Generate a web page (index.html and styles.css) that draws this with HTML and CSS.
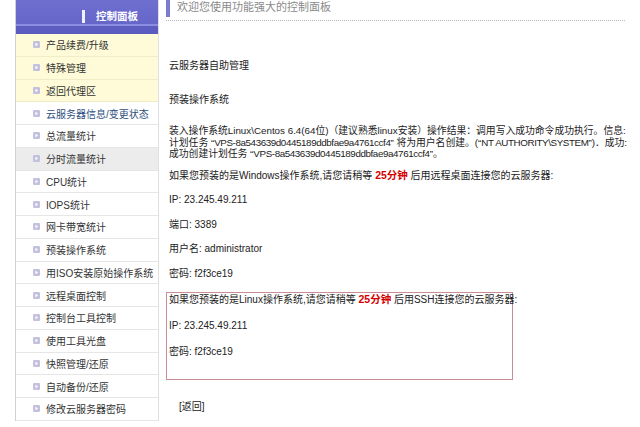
FILE: index.html
```html
<!DOCTYPE html>
<html lang="zh-CN">
<head>
<meta charset="utf-8">
<title>控制面板</title>
<link rel="stylesheet" href="styles.css">
</head>
<body>
<div class="page">
  <aside class="sidebar">
    <div class="side-head">
      <span class="head-bar"></span>
      <span class="head-title">控制面板</span>
    </div>
    <ul class="menu">
      <li class="item yellow"><svg class="bul" viewBox="0 0 7 7"><rect width="7" height="7" rx="1.2" fill="#c3c1dd"/><path d="M2.5 1.8 L5 3.5 L2.5 5.2Z" fill="#fff"/></svg>产品续费/升级</li>
      <li class="item yellow"><svg class="bul" viewBox="0 0 7 7"><rect width="7" height="7" rx="1.2" fill="#c3c1dd"/><path d="M2.5 1.8 L5 3.5 L2.5 5.2Z" fill="#fff"/></svg>特殊管理</li>
      <li class="item yellow"><svg class="bul" viewBox="0 0 7 7"><rect width="7" height="7" rx="1.2" fill="#c3c1dd"/><path d="M2.5 1.8 L5 3.5 L2.5 5.2Z" fill="#fff"/></svg>返回代理区</li>
      <li class="item active"><svg class="bul" viewBox="0 0 7 7"><rect width="7" height="7" rx="1.2" fill="#c3c1dd"/><path d="M2.5 1.8 L5 3.5 L2.5 5.2Z" fill="#fff"/></svg>云服务器信息/变更状态</li>
      <li class="item"><svg class="bul" viewBox="0 0 7 7"><rect width="7" height="7" rx="1.2" fill="#c3c1dd"/><path d="M2.5 1.8 L5 3.5 L2.5 5.2Z" fill="#fff"/></svg>总流量统计</li>
      <li class="item hover"><svg class="bul" viewBox="0 0 7 7"><rect width="7" height="7" rx="1.2" fill="#c3c1dd"/><path d="M2.5 1.8 L5 3.5 L2.5 5.2Z" fill="#fff"/></svg>分时流量统计</li>
      <li class="item"><svg class="bul" viewBox="0 0 7 7"><rect width="7" height="7" rx="1.2" fill="#c3c1dd"/><path d="M2.5 1.8 L5 3.5 L2.5 5.2Z" fill="#fff"/></svg>CPU统计</li>
      <li class="item"><svg class="bul" viewBox="0 0 7 7"><rect width="7" height="7" rx="1.2" fill="#c3c1dd"/><path d="M2.5 1.8 L5 3.5 L2.5 5.2Z" fill="#fff"/></svg>IOPS统计</li>
      <li class="item"><svg class="bul" viewBox="0 0 7 7"><rect width="7" height="7" rx="1.2" fill="#c3c1dd"/><path d="M2.5 1.8 L5 3.5 L2.5 5.2Z" fill="#fff"/></svg>网卡带宽统计</li>
      <li class="item"><svg class="bul" viewBox="0 0 7 7"><rect width="7" height="7" rx="1.2" fill="#c3c1dd"/><path d="M2.5 1.8 L5 3.5 L2.5 5.2Z" fill="#fff"/></svg>预装操作系统</li>
      <li class="item"><svg class="bul" viewBox="0 0 7 7"><rect width="7" height="7" rx="1.2" fill="#c3c1dd"/><path d="M2.5 1.8 L5 3.5 L2.5 5.2Z" fill="#fff"/></svg>用ISO安装原始操作系统</li>
      <li class="item"><svg class="bul" viewBox="0 0 7 7"><rect width="7" height="7" rx="1.2" fill="#c3c1dd"/><path d="M2.5 1.8 L5 3.5 L2.5 5.2Z" fill="#fff"/></svg>远程桌面控制</li>
      <li class="item"><svg class="bul" viewBox="0 0 7 7"><rect width="7" height="7" rx="1.2" fill="#c3c1dd"/><path d="M2.5 1.8 L5 3.5 L2.5 5.2Z" fill="#fff"/></svg>控制台工具控制</li>
      <li class="item"><svg class="bul" viewBox="0 0 7 7"><rect width="7" height="7" rx="1.2" fill="#c3c1dd"/><path d="M2.5 1.8 L5 3.5 L2.5 5.2Z" fill="#fff"/></svg>使用工具光盘</li>
      <li class="item"><svg class="bul" viewBox="0 0 7 7"><rect width="7" height="7" rx="1.2" fill="#c3c1dd"/><path d="M2.5 1.8 L5 3.5 L2.5 5.2Z" fill="#fff"/></svg>快照管理/还原</li>
      <li class="item"><svg class="bul" viewBox="0 0 7 7"><rect width="7" height="7" rx="1.2" fill="#c3c1dd"/><path d="M2.5 1.8 L5 3.5 L2.5 5.2Z" fill="#fff"/></svg>自动备份/还原</li>
      <li class="item"><svg class="bul" viewBox="0 0 7 7"><rect width="7" height="7" rx="1.2" fill="#c3c1dd"/><path d="M2.5 1.8 L5 3.5 L2.5 5.2Z" fill="#fff"/></svg>修改云服务器密码</li>
    </ul>
  </aside>
  <main class="main">
    <div class="title"><div class="title-inner">欢迎您使用功能强大的控制面板</div></div>
    <p class="line t1">云服务器自助管理</p>
    <p class="line t2">预装操作系统</p>
    <p class="para">装入操作系统Linux\Centos 6.4(64位)（建议熟悉linux安装）操作结果：调用写入成功命令成功执行。信息:<br>计划任务 “<span class="lat">VPS-8a543639d0445189ddbfae9a4761ccf4</span>” 将为用户名创建。(“<span class="lat">NT AUTHORITY\SYSTEM</span>”)．成功:<br>成功创建计划任务 “<span class="lat">VPS-8a543639d0445189ddbfae9a4761ccf4</span>”。</p>
    <p class="line t3">如果您预装的是Windows操作系统,请您请稍等 <b class="red">25分钟</b> 后用远程桌面连接您的云服务器:</p>
    <p class="line t4">IP: 23.245.49.211</p>
    <p class="line t4">端口: 3389</p>
    <p class="line t4">用户名: administrator</p>
    <p class="line t4">密码: f2f3ce19</p>
    <div class="box">
      <p class="line">如果您预装的是Linux操作系统,请您请稍等 <b class="red">25分钟</b> 后用SSH连接您的云服务器:</p>
      <p class="line t5">IP: 23.245.49.211</p>
      <p class="line t5">密码: f2f3ce19</p>
    </div>
    <p class="line back">[返回]</p>
  </main>
</div>
</body>
</html>
```

FILE: styles.css
```css
* { box-sizing: border-box; }
html, body { margin: 0; padding: 0; background: #fff; }
body {
  width: 640px;
  height: 427px;
  overflow: hidden;
  font-family: "Liberation Sans", "Noto Sans CJK SC", sans-serif;
  font-size: 10px;
  color: #222;
}
.page { display: flex; align-items: flex-start; }

.sidebar {
  width: 144px;
  margin-left: 15px;
  border-left: 1px solid #d0d0d0;
  border-right: 1px solid #e0e0e0;
  flex: none;
}
.side-head {
  height: 34px;
  background: linear-gradient(to bottom, #6f6fd0 0, #6666c9 24px, #8c8ce0 24px, #8c8ce0 26px, #5d5dc1 26px, #5b5bbf 34px);
  display: flex;
  align-items: flex-start;
  padding-top: 10px;
  padding-left: 66px;
}
.head-bar {
  width: 3px;
  height: 13px;
  background: #f2f2ff;
  margin-right: 11px;
}
.head-title {
  color: #fff;
  font-weight: bold;
  font-size: 10.5px;
  line-height: 13px;
}
.menu { list-style: none; margin: 0; padding: 0; }
.item {
  height: 22.75px;
  display: flex;
  align-items: center;
  padding-left: 17px;
  border-bottom: 1px solid #e6e6e6;
  color: #333;
  font-size: 10px;
}
.item.yellow { background: #fffbd8; border-bottom-color: #f0ecc8; }
.item.active { color: #2f4f80; }
.item.hover { background: #ececec; }
.bul { width: 7px; height: 7px; margin-right: 6px; flex: none; }

.main { flex: 1; margin-left: 7px; padding-right: 8px; }
.title { border-bottom: 1px dotted #b5b5b5; padding-bottom: 3px; width: 459px; }
.title-inner {
  border-left: 4px solid #7c7cd0;
  height: 17px;
  line-height: 15px;
  padding-left: 7px;
  font-size: 11px;
  color: #8a8a8a;
}
.line { margin: 0; line-height: 12px; padding-left: 3px; white-space: nowrap; }
.t1 { margin-top: 39px; }
.t2 { margin-top: 22px; }
.para {
  margin: 19px 0 0;
  padding-left: 3px;
  line-height: 11.5px;
  font-size: 9.8px;
  white-space: nowrap;
}
.lat { letter-spacing: -0.4px; }
.t3 { margin-top: 9px; }
.t4 { margin-top: 12.5px; }
.red { color: #d40000; font-weight: bold; font-size: 10.5px; }
.box {
  margin-top: 12px;
  width: 347px;
  border: 1px solid #c98d95;
  padding: 0 0 21px 0;
}
.box .line { padding-left: 2px; }
.t5 { margin-top: 14px; }
.back { margin-top: 21px; padding-left: 13px; }
```
